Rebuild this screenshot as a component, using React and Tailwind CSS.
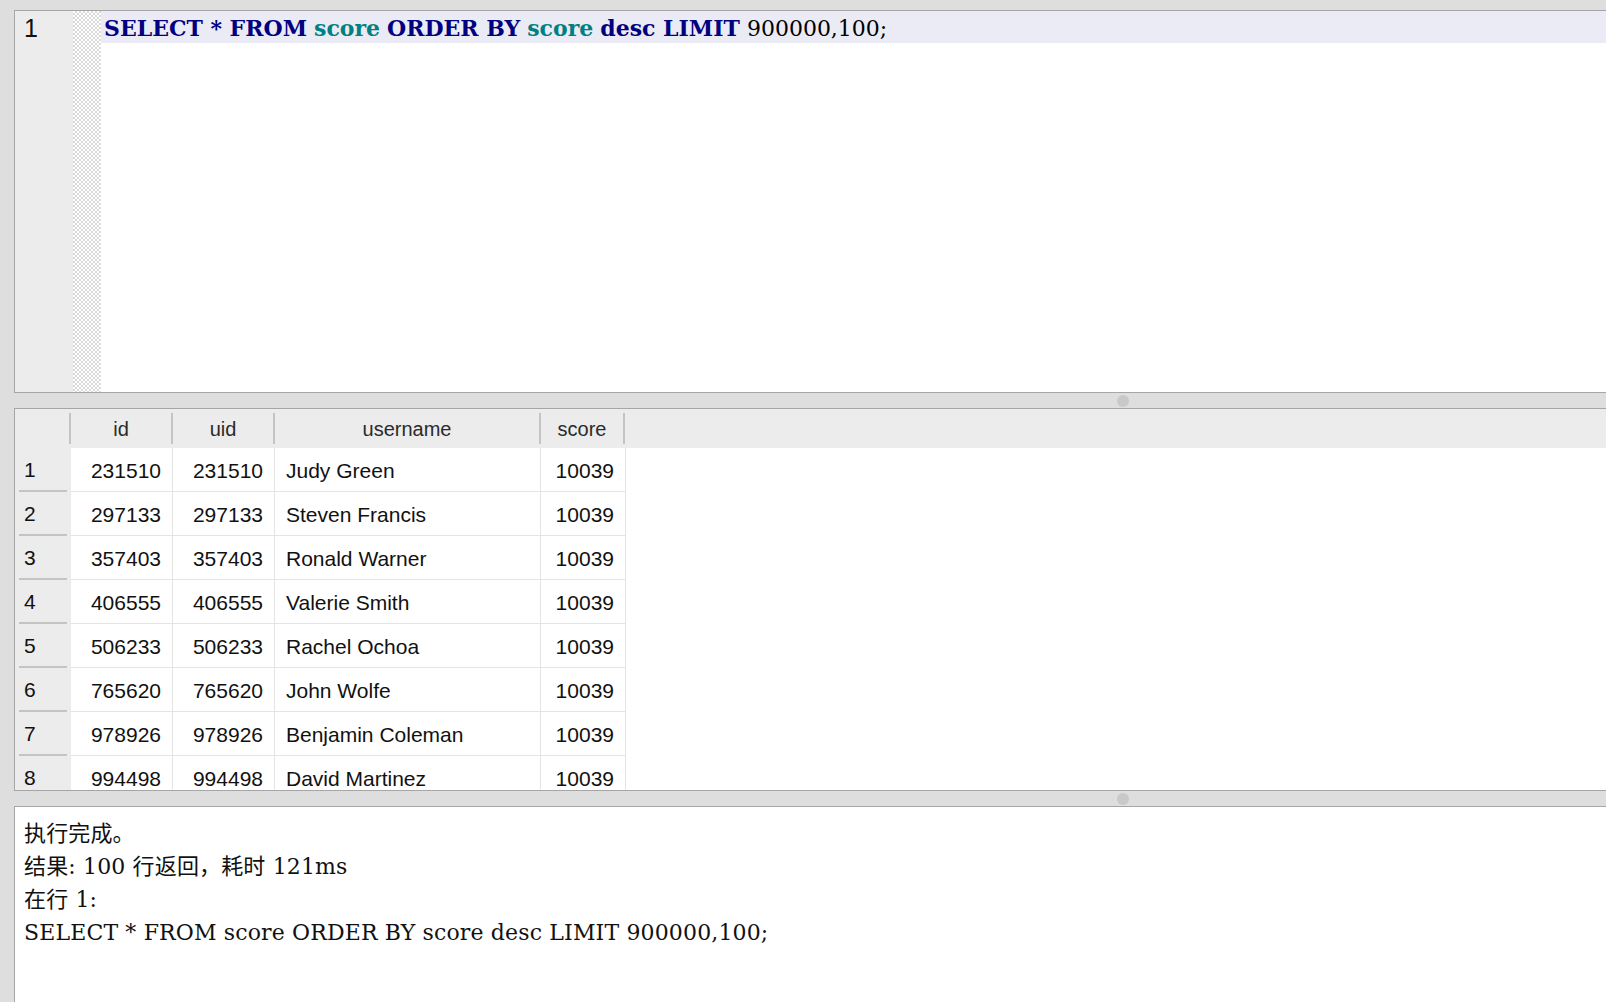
import React from 'react';

const rows = [
  { id: 231510, uid: 231510, username: 'Judy Green', score: 10039 },
  { id: 297133, uid: 297133, username: 'Steven Francis', score: 10039 },
  { id: 357403, uid: 357403, username: 'Ronald Warner', score: 10039 },
  { id: 406555, uid: 406555, username: 'Valerie Smith', score: 10039 },
  { id: 506233, uid: 506233, username: 'Rachel Ochoa', score: 10039 },
  { id: 765620, uid: 765620, username: 'John Wolfe', score: 10039 },
  { id: 978926, uid: 978926, username: 'Benjamin Coleman', score: 10039 },
  { id: 994498, uid: 994498, username: 'David Martinez', score: 10039 },
];

const sans = "font-['Helvetica_Neue','Liberation_Sans',Arial,sans-serif]";
const serif = "font-['DejaVu_Serif','Noto_Sans_CJK_SC',serif]";

const Splitter = () => (
  <div className="h-[15px] shrink-0 flex items-center">
    <div className="ml-[1103px] w-[12px] h-[12px] rounded-full bg-[#c9c9c9]"></div>
  </div>
);

const App = () => {
  return (
    <div className="w-[1606px] h-[1002px] overflow-hidden bg-[#dedede] flex flex-col pt-[10px] pl-[14px]">
      {/* Editor */}
      <div className="h-[383px] shrink-0 flex bg-white border-t border-l border-b border-[#a6a6a6]">
        <div className={`w-[58px] shrink-0 bg-[#ececec] pl-[9px] pt-[2px] text-[25px] leading-[30px] text-[#111] ${sans}`}>1</div>
        <div className="w-[28px] shrink-0 bg-[image:repeating-conic-gradient(#d9d9d9_0_25%,#ffffff_0_50%)] bg-[length:4px_4px]"></div>
        <div className="flex-1">
          <div className={`h-[32px] bg-[#ebebf5] pl-[3px] pt-[3px] flex items-center text-[22px] whitespace-nowrap ${serif}`}>
            <span className="font-bold text-[#000080]">SELECT</span>
            <span className="font-bold text-[#000080]">&nbsp;*&nbsp;</span>
            <span className="font-bold text-[#000080]">FROM</span>&nbsp;
            <span className="font-bold text-[#008080]">score</span>&nbsp;
            <span className="font-bold text-[#000080]">ORDER BY</span>&nbsp;
            <span className="font-bold text-[#008080]">score</span>&nbsp;
            <span className="font-bold text-[#000080]">desc LIMIT</span>&nbsp;
            <span className="text-black">900000,100;</span>
          </div>
        </div>
      </div>

      <Splitter />

      {/* Result grid */}
      <div className={`h-[383px] shrink-0 overflow-hidden bg-white border-t border-l border-b border-[#a6a6a6] ${sans}`}>
        <div className="h-[39px] bg-[#ececec] flex items-center text-[20px] text-[#2a2a2a]">
          <div className="w-[56px] h-[31px] border-r-2 border-[#c4c4c4]"></div>
          <div className="w-[102px] h-[31px] border-r-2 border-[#c4c4c4] flex items-center justify-center">id</div>
          <div className="w-[102px] h-[31px] border-r-2 border-[#c4c4c4] flex items-center justify-center">uid</div>
          <div className="w-[266px] h-[31px] border-r-2 border-[#c4c4c4] flex items-center justify-center">username</div>
          <div className="w-[84px] h-[31px] border-r-2 border-[#c4c4c4] flex items-center justify-center">score</div>
        </div>
        {rows.map((r, i) => (
          <div key={r.id} className="h-[44px] flex text-[21px] text-[#111]">
            <div className="w-[56px] shrink-0 bg-[#ececec] flex flex-col">
              <div className="flex-1 flex items-center pl-[9px] pt-[2px]">{i + 1}</div>
              <div className="mx-[4px] h-[2px] bg-[#c4c4c4]"></div>
            </div>
            <div className="w-[102px] shrink-0 border-r border-b border-[#e4e4e4] flex items-center justify-end pr-[11px] pt-[2px]">{r.id}</div>
            <div className="w-[102px] shrink-0 border-r border-b border-[#e4e4e4] flex items-center justify-end pr-[11px] pt-[2px]">{r.uid}</div>
            <div className="w-[266px] shrink-0 border-r border-b border-[#e4e4e4] flex items-center pl-[11px] pt-[2px]">{r.username}</div>
            <div className="w-[85px] shrink-0 border-r border-b border-[#e4e4e4] flex items-center justify-end pr-[11px] pt-[2px]">{r.score}</div>
          </div>
        ))}
      </div>

      <Splitter />

      {/* Messages */}
      <div className={`flex-1 bg-white border-t border-l border-[#a6a6a6] pl-[9px] pt-[10px] text-[22px] leading-[33px] tracking-[0.15px] text-[#111] ${serif}`}>
        <div>执行完成。</div>
        <div>结果: 100 行返回，耗时 121ms</div>
        <div>在行 1:</div>
        <div>SELECT * FROM score ORDER BY score desc LIMIT 900000,100;</div>
      </div>
    </div>
  );
};

export default App;
